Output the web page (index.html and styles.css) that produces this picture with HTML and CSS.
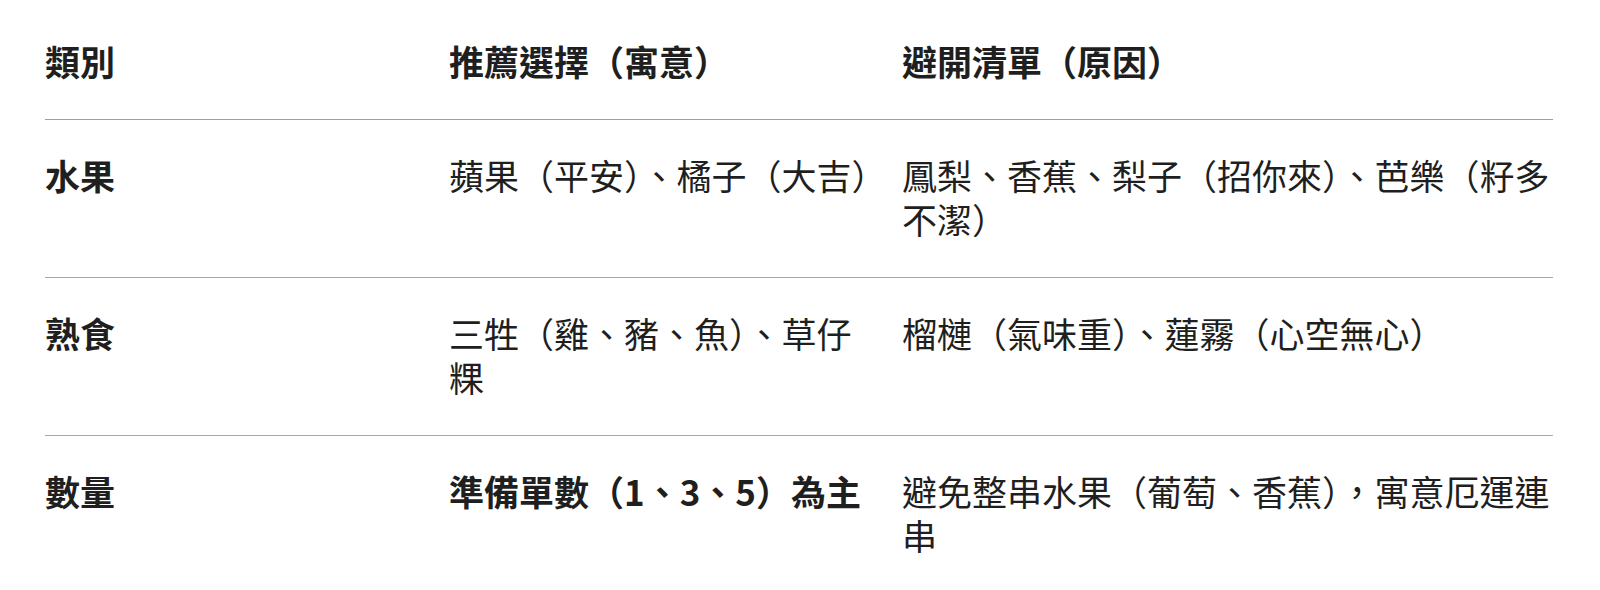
FILE: index.html
```html
<!DOCTYPE html>
<html lang="zh-Hant">
<head>
<meta charset="utf-8">
<link rel="stylesheet" href="styles.css">
</head>
<body>
<table class="tbl">
  <colgroup>
    <col class="c1"><col class="c2"><col class="c3">
  </colgroup>
  <thead>
    <tr><th>類別</th><th>推薦選擇（寓意）</th><th>避開清單（原因）</th></tr>
  </thead>
  <tbody>
    <tr><td class="cat">水果</td><td>蘋果（平安）、橘子（大吉）</td><td>鳳梨、香蕉、梨子（招你來）、芭樂（籽多不潔）</td></tr>
    <tr><td class="cat">熟食</td><td>三牲（雞、豬、魚）、草仔粿</td><td>榴槤（氣味重）、蓮霧（心空無心）</td></tr>
    <tr><td class="cat">數量</td><td><strong>準備單數（1、3、5）為主</strong></td><td>避免整串水果（葡萄、香蕉），寓意厄運連串</td></tr>
  </tbody>
</table>
</body>
</html>
```
FILE: styles.css
```css
html, body {
  margin: 0;
  padding: 0;
  background: #ffffff;
}
body {
  padding: 6px 47px 0 45px;
  font-family: "Noto Sans CJK TC", "Noto Sans CJK SC", sans-serif;
  color: #1f1f1f;
}
.tbl {
  width: 1508px;
  border-collapse: collapse;
  table-layout: fixed;
  font-size: 35px;
  line-height: 44px;
}
.c1 { width: 404px; }
.c2 { width: 453px; }
.c3 { width: 651px; }
.tbl th, .tbl td {
  text-align: left;
  vertical-align: top;
  padding: 33px 16px 36px 0;
  font-weight: 400;
}
.tbl th:nth-child(2), .tbl td:nth-child(2) {
  padding-right: 28px;
}
.tbl th:last-child, .tbl td:last-child {
  padding-right: 0;
}
.tbl th {
  font-weight: 700;
  border-bottom: 1px solid #9a9ea6;
}
.tbl tbody tr + tr td {
  border-top: 1px solid #a6a8ad;
}
.tbl td.cat {
  font-weight: 700;
}
.tbl strong {
  font-weight: 700;
}
```
